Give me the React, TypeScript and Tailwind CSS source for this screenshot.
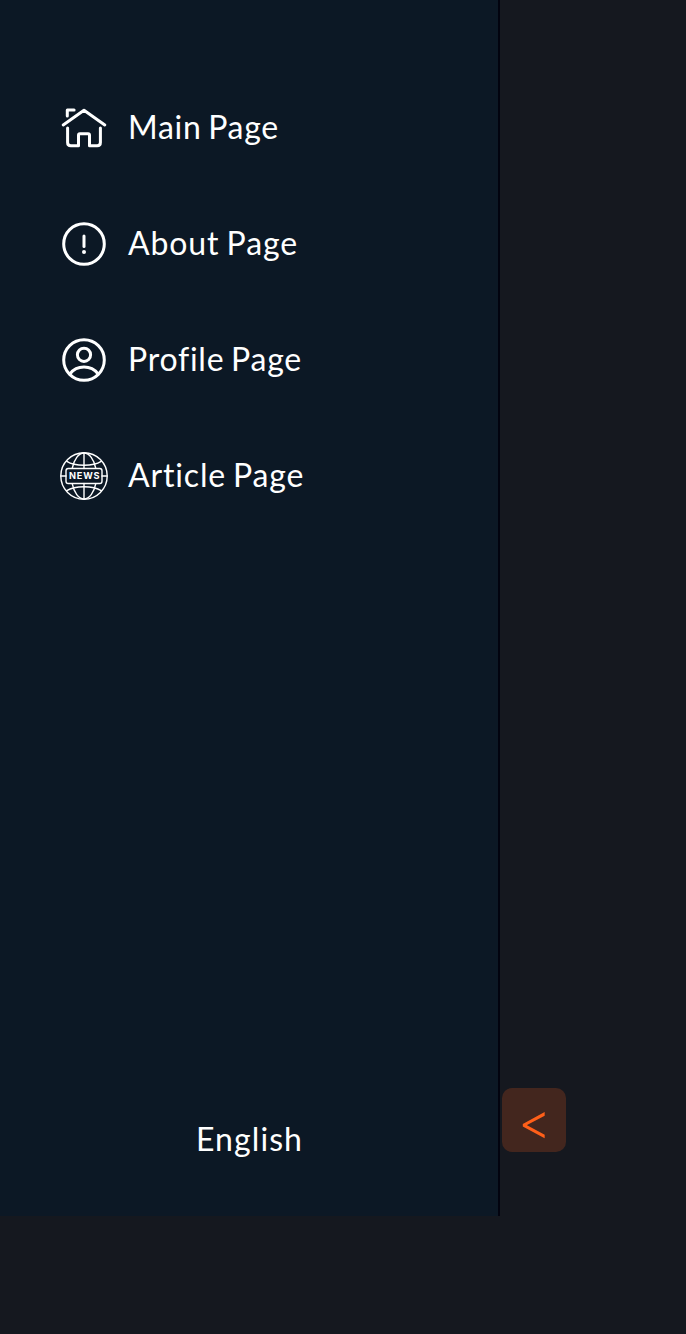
import React from "react";

const svg = {
  viewBox: "0 0 48 48",
  fill: "none",
  stroke: "currentColor",
  strokeLinecap: "round",
  strokeLinejoin: "round",
  className: "size-12 shrink-0",
} as const;

const HomeIcon = () => (
  <svg {...svg} strokeWidth="3">
    <path d="M3.2 21 24 6.3 44.8 21M7.3 12V6h6.8M7.6 24v14.5q0 3.2 3.2 3.2h7.7V31.2q0-1.4 1.4-1.4h8.2q1.4 0 1.4 1.4v10.5h7.7q3.2 0 3.2-3.2V24" />
  </svg>
);

const AboutIcon = () => (
  <svg {...svg} strokeWidth="3">
    <circle cx="24" cy="24" r="20.3" />
    <path d="M24 16v10.5" />
    <circle cx="24" cy="32" r="2" fill="currentColor" stroke="none" />
  </svg>
);

const ProfileIcon = () => (
  <svg {...svg} strokeWidth="3">
    <circle cx="24" cy="24" r="20.3" />
    <circle cx="24" cy="18.8" r="6.6" />
    <path d="M10 37.8Q15.2 31.1 24 31.1T38 37.8" />
  </svg>
);

const NewsIcon = () => (
  <svg {...svg} strokeWidth="1.4">
    <circle cx="24" cy="24" r="23.2" />
    <path d="M24 1v15.5M24 31.5V47M1 24h5M42 24h5" />
    <path d="M12.2 16.3C14 7.5 18.6 1 24 1s10 6.5 11.8 15.3M12.2 31.7C14 40.5 18.6 47 24 47s10-6.5 11.8-15.3" />
    <path d="M6.8 9.3C11 12 17 13.2 24 13.2S37 12 41.2 9.3M6.8 38.7C11 36 17 34.8 24 34.8s13 1.2 17.2 3.9" />
    <rect x="6" y="16.5" width="36" height="15" rx="2.2" />
    <text
      x="24.3"
      y="27.3"
      textAnchor="middle"
      textLength="30.5"
      fontSize="9.2"
      fontWeight="700"
      fill="currentColor"
      stroke="none"
      className="font-['Inter',sans-serif]"
    >
      NEWS
    </text>
  </svg>
);

const items = [
  { label: "Main Page", Icon: HomeIcon, spacing: "tracking-[0.7px] [word-spacing:-2.2px]" },
  { label: "About Page", Icon: AboutIcon, spacing: "tracking-[0.9px] [word-spacing:-2px]" },
  { label: "Profile Page", Icon: ProfileIcon, spacing: "tracking-[0.75px] [word-spacing:-2.2px]" },
  { label: "Article Page", Icon: NewsIcon, spacing: "tracking-[0.85px] [word-spacing:-2.2px]" },
];

export default function App() {
  return (
    <div className="flex h-[1334px] w-[686px] items-start bg-[#15181f] font-['Lato',sans-serif] text-[32px] leading-[48px] text-white">
      <aside className="flex h-[1216px] w-[500px] flex-col justify-between border-r-2 border-[#02030f] bg-[#0c1825] pt-[104px] pb-[53px]">
        <nav className="flex flex-col gap-[68px] pl-[60px]">
          {items.map(({ label, Icon, spacing }) => (
            <a key={label} className="flex h-12 items-center gap-5">
              <Icon />
              <span className={`pb-0.5 ${spacing}`}>{label}</span>
            </a>
          ))}
        </nav>
        <button className="self-center pl-px tracking-[1.1px]">English</button>
      </aside>
      <button className="mt-[1088px] ml-[2px] flex size-16 items-center justify-center rounded-[10px] bg-[#43261e] pt-0.5 pl-px font-['Inter',sans-serif] text-[50px] font-light text-[#ff5f19]">
        &lt;
      </button>
    </div>
  );
}
